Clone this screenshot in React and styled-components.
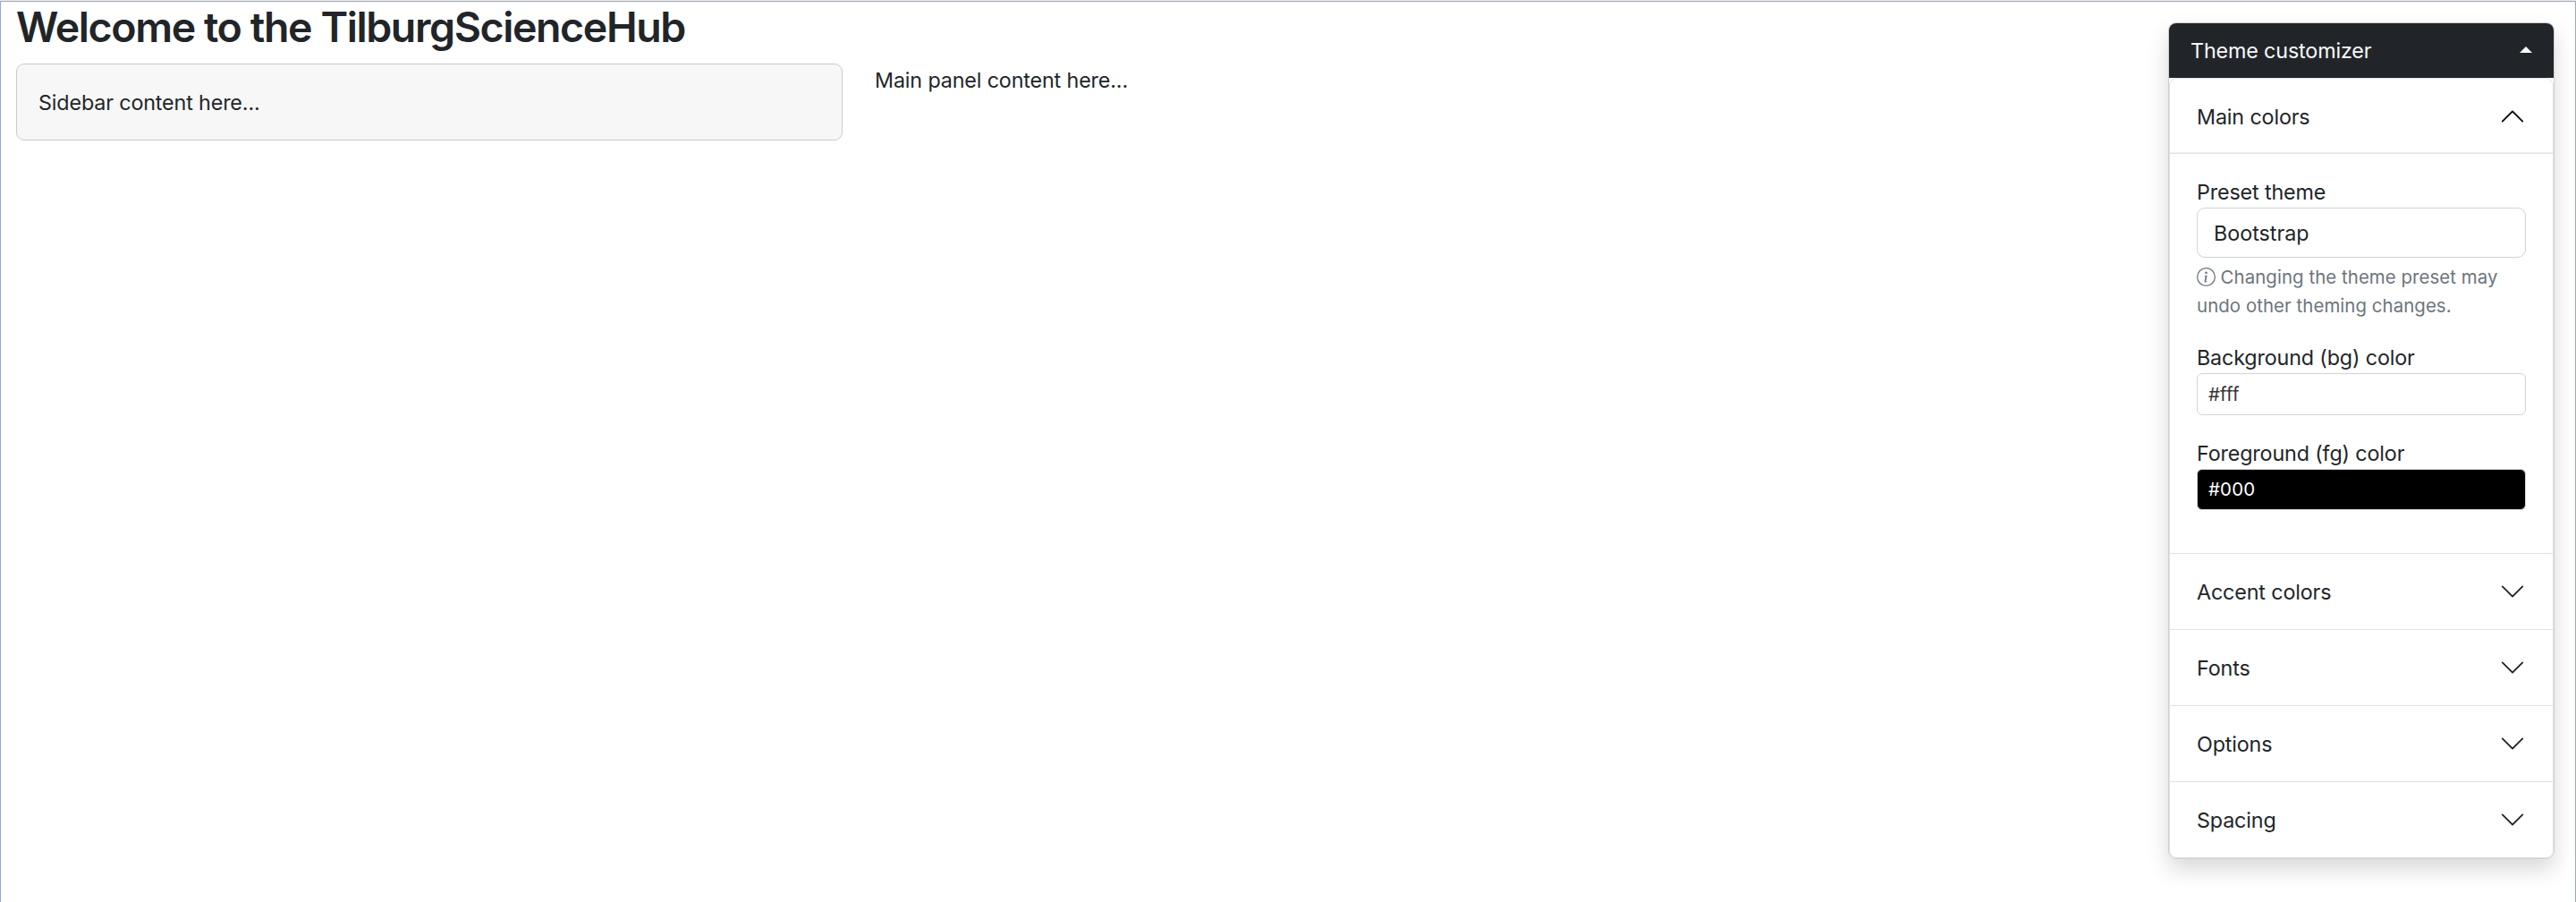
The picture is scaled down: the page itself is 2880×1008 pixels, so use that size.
import React from 'react';
import styled, { createGlobalStyle } from 'styled-components';
import { BsInfoCircle, BsChevronDown } from 'react-icons/bs';

const Global = createGlobalStyle`
  *, *::before, *::after { box-sizing: border-box; }
  body { margin: 0; background: #fff; }
`;

const Page = styled.div`
  min-height: 1008px;
  border-top: 1px solid #ebebeb;
  color: #212529;
  font-family: Inter, sans-serif;
  font-size: 23.3px;
  line-height: 36px;
  letter-spacing: -0.14px;
`;

const Frame = styled.div`
  position: relative;
  min-height: 1007px;
  padding: 0 17px;
  border: 1px solid #8ea9db;
  border-bottom: 0;
`;

const Title = styled.h2`
  margin: 0 0 12px;
  font-size: 46.5px;
  font-weight: 600;
  line-height: 57px;
  letter-spacing: -1.4px;
`;

const Columns = styled.div`
  display: grid;
  grid-template-columns: 924px 1fr;
  gap: 36px;
  align-items: start;
`;

const Sidebar = styled.aside`
  padding: 25px 24px 23px;
  height: 86px;
  border: 1px solid #cbcbcb;
  border-radius: 9px;
  background: #f7f7f7;
`;

const Main = styled.main`
  min-width: 0;
  padding-top: 1px;
`;

const Card = styled.section`
  position: absolute;
  top: 23px;
  right: 23px;
  width: 432px;
  border: 1px solid #cfd0d1;
  border-radius: 9px;
  background: #fff;
  box-shadow: 0 12px 24px rgba(0, 0, 0, 0.15);
`;

const CardHeader = styled.header`
  display: flex;
  align-items: center;
  justify-content: space-between;
  height: 61px;
  padding: 0 24px;
  border-radius: 8px 8px 0 0;
  background: #212529;
  color: #f8f9fa;
`;

const Caret = styled.span`
  margin-bottom: 2px;
  border: 7px solid transparent;
  border-top: 0;
  border-bottom-color: #f8f9fa;
`;

const Accordion = styled.div`
  border: 1px solid #dee2e6;
  border-radius: 9px;
`;

const Item = styled.div`
  & + & {
    border-top: 1px solid #dee2e6;
  }
`;

const ItemButton = styled.button`
  display: flex;
  align-items: center;
  justify-content: space-between;
  width: 100%;
  height: 84px;
  padding: 0 30px;
  border: 0;
  background: transparent;
  color: inherit;
  font: inherit;
  letter-spacing: inherit;
  box-shadow: ${p => (p.$open ? 'inset 0 -1.5px 0 #dee2e6' : 'none')};
`;

const ItemTitle = styled.span`
  padding-top: 2px;
`;

const Chevron = styled(BsChevronDown)`
  width: 30px;
  height: 30px;
  color: ${p => (p.$open ? '#000' : '#212529')};
  transform: ${p => (p.$open ? 'rotate(180deg)' : 'none')};
`;

const ItemBody = styled.div`
  height: 446px;
  padding: 24px 30px;
`;

const Field = styled.div`
  margin-bottom: ${p => p.$gap}px;
`;

const Label = styled.label`
  display: block;
  height: 36px;
  padding-top: 1px;
`;

const Select = styled.div`
  height: 56px;
  padding: 10px 18px 8px;
  border: 1px solid #ced4da;
  border-radius: 9px;
  letter-spacing: 0;
`;

const Help = styled.div`
  margin-top: 6px;
  color: #6c757d;
  font-size: 20.4px;
  line-height: 32px;
  letter-spacing: 0.07px;
  white-space: nowrap;
`;

const InfoIcon = styled(BsInfoCircle)`
  width: 21px;
  height: 21px;
  margin-right: 5.6px;
  vertical-align: -2.6px;
`;

const ColorInput = styled.div`
  display: flex;
  align-items: center;
  height: ${p => p.$h}px;
  padding: 0 12px;
  border: 1px solid #ced4da;
  border-radius: 6px;
  background: ${p => p.$bg};
  color: ${p => p.$fg};
  font-size: 20.4px;
  letter-spacing: 0.2px;
`;

const closedItems = ['Accent colors', 'Fonts', 'Options', 'Spacing'];

export default function App() {
  return (
    <Page>
      <Global />
      <Frame>
        <Title>Welcome to the TilburgScienceHub</Title>
        <Columns>
          <Sidebar>Sidebar content here...</Sidebar>
          <Main>Main panel content here...</Main>
        </Columns>
        <Card>
          <CardHeader>
            Theme customizer
            <Caret />
          </CardHeader>
          <Accordion>
            <Item>
              <ItemButton $open>
                <ItemTitle>Main colors</ItemTitle>
                <Chevron $open />
              </ItemButton>
              <ItemBody>
                <Field $gap={23}>
                  <Label>Preset theme</Label>
                  <Select>Bootstrap</Select>
                  <Help>
                    <InfoIcon />Changing the theme preset may
                    <br />
                    undo other theming changes.
                  </Help>
                </Field>
                <Field $gap={24}>
                  <Label>Background (bg) color</Label>
                  <ColorInput $h={47} $bg="#fff" $fg="#333">#fff</ColorInput>
                </Field>
                <Field $gap={0}>
                  <Label>Foreground (fg) color</Label>
                  <ColorInput $h={46} $bg="#000" $fg="#fff">#000</ColorInput>
                </Field>
              </ItemBody>
            </Item>
            {closedItems.map(name => (
              <Item key={name}>
                <ItemButton>
                  <ItemTitle>{name}</ItemTitle>
                  <Chevron />
                </ItemButton>
              </Item>
            ))}
          </Accordion>
        </Card>
      </Frame>
    </Page>
  );
}
